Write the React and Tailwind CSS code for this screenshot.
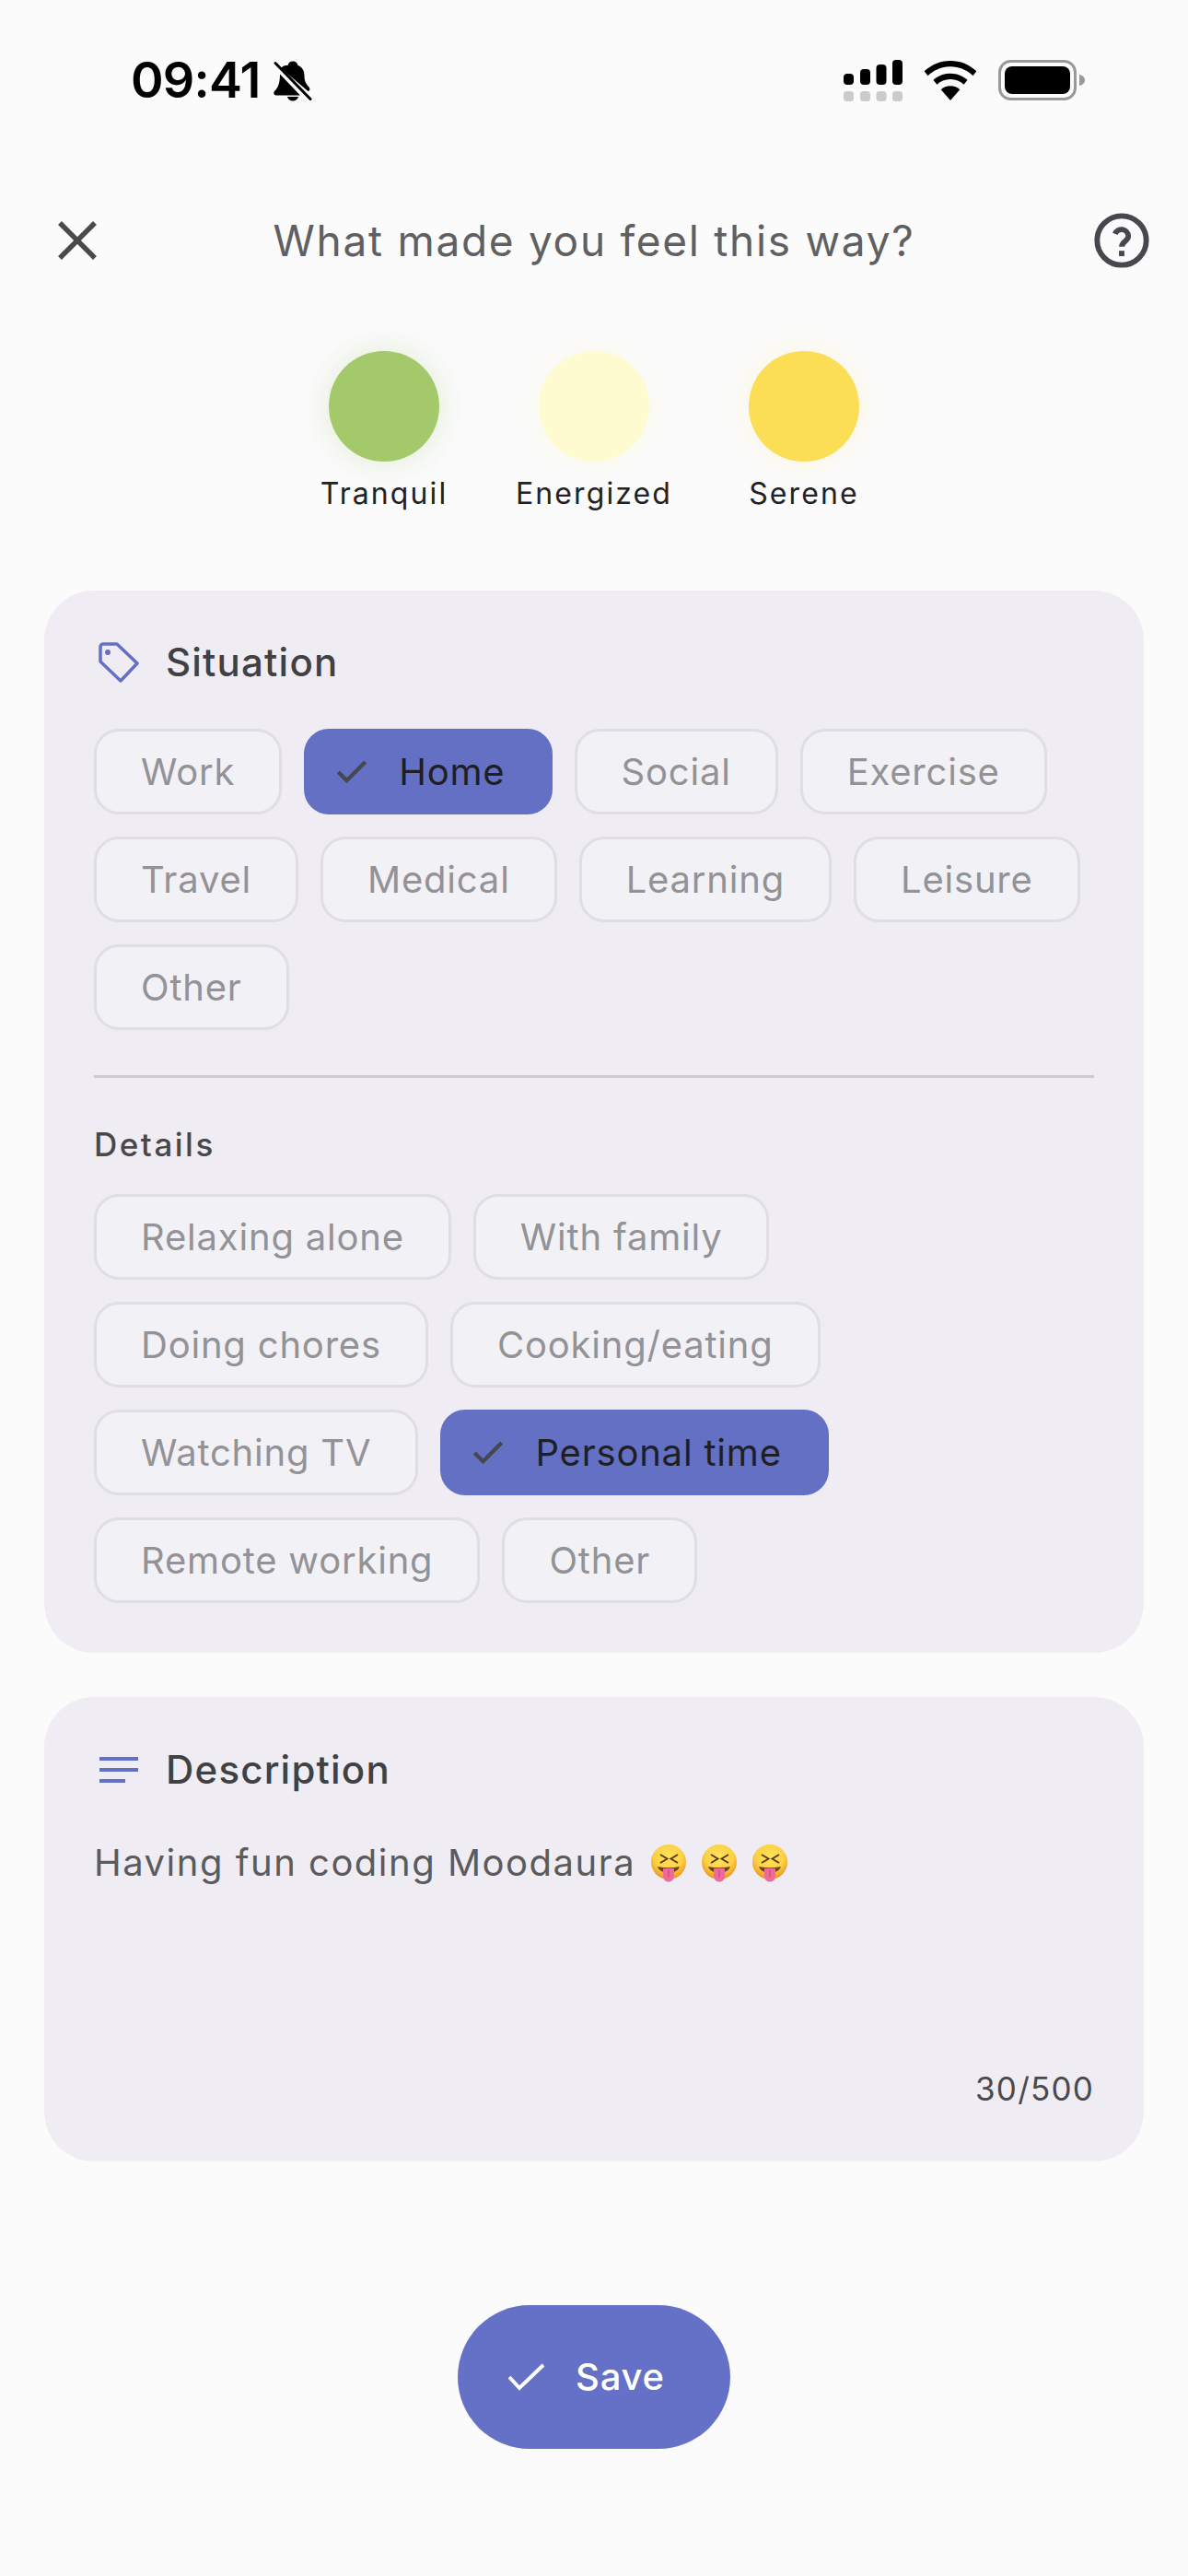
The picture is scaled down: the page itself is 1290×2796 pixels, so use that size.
const SITUATIONS = [
  { label: 'Work' },
  { label: 'Home', selected: true },
  { label: 'Social' },
  { label: 'Exercise' },
  { label: 'Travel' },
  { label: 'Medical' },
  { label: 'Learning' },
  { label: 'Leisure' },
  { label: 'Other' },
];

const DETAILS = [
  { label: 'Relaxing alone' },
  { label: 'With family' },
  { label: 'Doing chores' },
  { label: 'Cooking/eating' },
  { label: 'Watching TV' },
  { label: 'Personal time', selected: true },
  { label: 'Remote working' },
  { label: 'Other' },
];

const MOODS = [
  { label: 'Tranquil', dot: 'bg-[#a4c96b] shadow-[0_0_36px_rgba(165,203,108,0.3)]' },
  { label: 'Energized', dot: 'bg-[#fefbd0] shadow-[0_0_36px_rgba(254,251,208,0.4)]' },
  { label: 'Serene', dot: 'bg-[#fbde56] shadow-[0_0_36px_rgba(252,223,88,0.2)]' },
];

function StatusBar() {
  return (
    <div className="flex h-[174px] items-center justify-between pl-[142px] pr-[112px]">
      <div className="flex items-center gap-[15px]">
        <span className="text-[54px] leading-none font-semibold tracking-[-0.8px] text-black">09:41</span>
        <svg width="42" height="45" viewBox="0 0 42 44">
          <path d="M21 1c3 0 5 2 5.500 4.500 5 2 7 6 7 11 0 5 1 8 5 12.500 1.500 2 1 4-1 4.500L8 8.500C9.500 6.500 11.500 5 15.500 5.500 16 3 18 1 21 1ZM7 15l22 23H3c-2.500 0-3.500-2.500-2-4.500 4-4 6-9 6-18.500ZM15 39.500h12c-.5 2.500-3 4.500-6 4.500s-5.500-2-6-4.500Z" fill="#000" />
          <path d="M2 3l38 39" stroke="#000" strokeWidth="3" strokeLinecap="round" />
        </svg>
      </div>
      <div className="flex items-center gap-[23px]">
        <svg width="64" height="45" viewBox="0 0 64 45">
          <g fill="#000">
            <rect x="0" y="15" width="11" height="12" rx="4" />
            <rect x="18" y="10" width="11" height="17" rx="4" />
            <rect x="35.500" y="5" width="11" height="22" rx="4" />
            <rect x="53" y="0" width="11" height="27" rx="4" />
          </g>
          <g fill="#cbcbcb">
            <rect x="0" y="34" width="11" height="11" rx="3.500" />
            <rect x="18" y="34" width="11" height="11" rx="3.500" />
            <rect x="35.500" y="34" width="11" height="11" rx="3.500" />
            <rect x="53" y="34" width="11" height="11" rx="3.500" />
          </g>
        </svg>
        <svg width="58" height="43" viewBox="0 0 58 44">
          <path d="M29 0c11 0 21 4 29 11.500l-4 5C47 10 38.500 6.500 29 6.500S11 10 4 16.500l-4-5C8 4 18 0 29 0Z" fill="#000" />
          <path d="M29 14c7.500 0 14 2.800 19 7.300l-4 5C40 22.700 34.800 20.500 29 20.500s-11 2.200-15 5.800l-4-5C15 16.800 21.500 14 29 14Z" fill="#000" />
          <path d="M29 28c4 0 7.800 1.500 10.500 4L29 44 18.500 32c2.700-2.500 6.500-4 10.500-4Z" fill="#000" />
        </svg>
        <svg width="94" height="44" viewBox="0 0 94 44">
          <rect x="1.500" y="1.500" width="82" height="41" rx="12" fill="none" stroke="#999" strokeWidth="3" />
          <rect x="7" y="7" width="71" height="30" rx="8" fill="#000" />
          <path d="M88 16c3 .5 6 2.800 6 6s-3 5.500-6 6Z" fill="#999" />
        </svg>
      </div>
    </div>
  );
}

function Header() {
  return (
    <div className="mt-[42px] grid h-[90px] grid-cols-[1fr_auto_1fr] items-center px-[40px]">
      <svg className="ml-[23px]" width="42" height="42" viewBox="0 0 42 42" fill="none" stroke="#4a4a4c" strokeWidth="5.500">
        <path d="M2 2l38 38M40 2L2 40" />
      </svg>
      <h1 className="text-[46px] leading-none tracking-[1.7px] text-[#606062]">What made you feel this way?</h1>
      <svg className="justify-self-end" width="64" height="64" viewBox="0 0 24 24" fill="none" stroke="#47474d" strokeWidth="2.200">
        <circle cx="12" cy="12" r="10" />
        <path d="M9.300 9.300a2.800 2.800 0 0 1 5.400.900c0 1.900-2.700 2.400-2.700 4.300" />
        <path d="M10.900 16.200h2.200v2.200h-2.200z" fill="#47474d" stroke="none" />
      </svg>
    </div>
  );
}

function MoodDot({ label, dot }) {
  return (
    <div className="flex w-[228px] flex-col items-center gap-[15px]">
      <div className={`h-[120px] w-[120px] rounded-full ${dot}`} />
      <span className="text-[32px] leading-[40px] tracking-[2.1px] text-[#222224]">{label}</span>
    </div>
  );
}

function ChipCheck() {
  return (
    <svg width="44" height="44" viewBox="0 0 24 24" fill="none" stroke="#47474f" strokeWidth="2.300">
      <path d="M20 6L9 17l-5-5" />
    </svg>
  );
}

function Chip({ label, selected }) {
  if (selected) {
    return (
      <div className="flex h-[93px] items-center gap-[29px] rounded-[27px] bg-[#6370c4] pl-[30px] pr-[51px] text-[40px] leading-none tracking-[0.8px] text-[#1f1f23]">
        <ChipCheck />
        {label}
      </div>
    );
  }
  return (
    <div className="flex h-[93px] items-center rounded-[27px] border-[3px] border-[#dfdee3] bg-[#f2f1f6] px-[48px] text-[40px] leading-none tracking-[0.8px] text-[#939296]">
      {label}
    </div>
  );
}

function ChipGroup({ items }) {
  return (
    <div className="flex flex-wrap gap-x-[24px] gap-y-[24px]">
      {items.map((item) => (
        <Chip key={item.label} {...item} />
      ))}
    </div>
  );
}

// 😝 drawn by hand, no colour emoji font on the box
function SquintFace() {
  return (
    <svg width="38" height="42" viewBox="0 0 38 42">
      <defs>
        <radialGradient id="face" cx="0.5" cy="0.35" r="0.62">
          <stop offset="0" stopColor="#ffe45c" />
          <stop offset="0.65" stopColor="#fdd043" />
          <stop offset="1" stopColor="#ee9a22" />
        </radialGradient>
      </defs>
      <circle cx="19" cy="20" r="19" fill="url(#face)" />
      <path d="M10 12l7.500 4.500-7.500 4.500M29 12l-7.500 4.500 7.500 4.500" fill="none" stroke="#5b3a12" strokeWidth="1.900" strokeLinejoin="miter" />
      <path d="M7 25c8 1.600 16 1.600 24 0-1.500 4.500-6 6.500-12 6.500S8.500 29.500 7 25Z" fill="#6a4216" />
      <path d="M13 27h12v8c0 4-2.500 6.500-6 6.500s-6-2.500-6-6.500Z" fill="#ee6a9c" />
      <path d="M19 29v7" stroke="#c84a7c" strokeWidth="1.200" strokeLinecap="round" />
    </svg>
  );
}

function SectionTitle({ icon, children }) {
  return (
    <div className="flex items-center gap-[29px] pl-[5px]">
      <span className="flex w-[44px] justify-center">{icon}</span>
      <h2 className="text-[42px] leading-none font-medium tracking-[1.2px] text-[#414144]">{children}</h2>
    </div>
  );
}

export default function App() {
  return (
    <div className="flex h-[2796px] w-[1290px] flex-col bg-[#fbfbfc] font-['Inter',sans-serif]">
      <StatusBar />
      <Header />

      <div className="mt-[75px] flex justify-center">
        {MOODS.map((m) => (
          <MoodDot key={m.label} {...m} />
        ))}
      </div>

      <div className="mx-[48px] mt-[85px] flex h-[1153px] flex-col rounded-[54px] bg-[#efedf3] px-[54px] pt-[56px]">
        <SectionTitle
          icon={
            <svg width="44" height="44" viewBox="0 0 44 44" fill="none" stroke="#6370c4" strokeWidth="3.500" strokeLinejoin="round">
              <path d="M2 5a3 3 0 0 1 3-3h15l22 21-18 19L2 21Z" />
              <circle cx="10" cy="11" r="3" fill="#6370c4" stroke="none" />
            </svg>
          }
        >
          Situation
        </SectionTitle>
        <div className="mt-[50px]">
          <ChipGroup items={SITUATIONS} />
        </div>
        <div className="mt-[49px] h-[3px] bg-[#cbcace]" />
        <h3 className="mt-[55px] text-[35px] leading-none font-medium tracking-[2.5px] text-[#48484b]">Details</h3>
        <div className="mt-[36px]">
          <ChipGroup items={DETAILS} />
        </div>
      </div>

      <div className="mx-[48px] mt-[48px] flex h-[504px] flex-col rounded-[54px] bg-[#efedf3] px-[54px] pt-[58px]">
        <SectionTitle
          icon={
            <svg width="42" height="28" viewBox="0 0 42 28" fill="none" stroke="#6370c4" strokeWidth="4">
              <path d="M0 2h42M0 14h42M0 26h28" />
            </svg>
          }
        >
          Description
        </SectionTitle>
        <div className="mt-[59px] flex items-center gap-[17px] text-[40px] leading-none tracking-[1.5px] text-[#5b5b5e]">
          <span>Having fun coding Moodaura</span>
          <SquintFace />
          <SquintFace />
          <SquintFace />
        </div>
        <div className="mt-auto mb-[61px] text-right text-[35px] leading-none tracking-[1.2px] text-[#4a4a4e]">30/500</div>
      </div>

      <div className="mt-[156px] flex justify-center">
        <button className="flex h-[156px] w-[296px] items-center gap-[33px] rounded-[78px] bg-[#6571c6] pl-[55px] text-[40px] font-medium tracking-[0.8px] text-white">
          <svg width="40" height="30" viewBox="0 0 40 30" fill="none" stroke="#fff" strokeWidth="4">
            <path d="M1 15l11 12L38 2" />
          </svg>
          Save
        </button>
      </div>
    </div>
  );
}
